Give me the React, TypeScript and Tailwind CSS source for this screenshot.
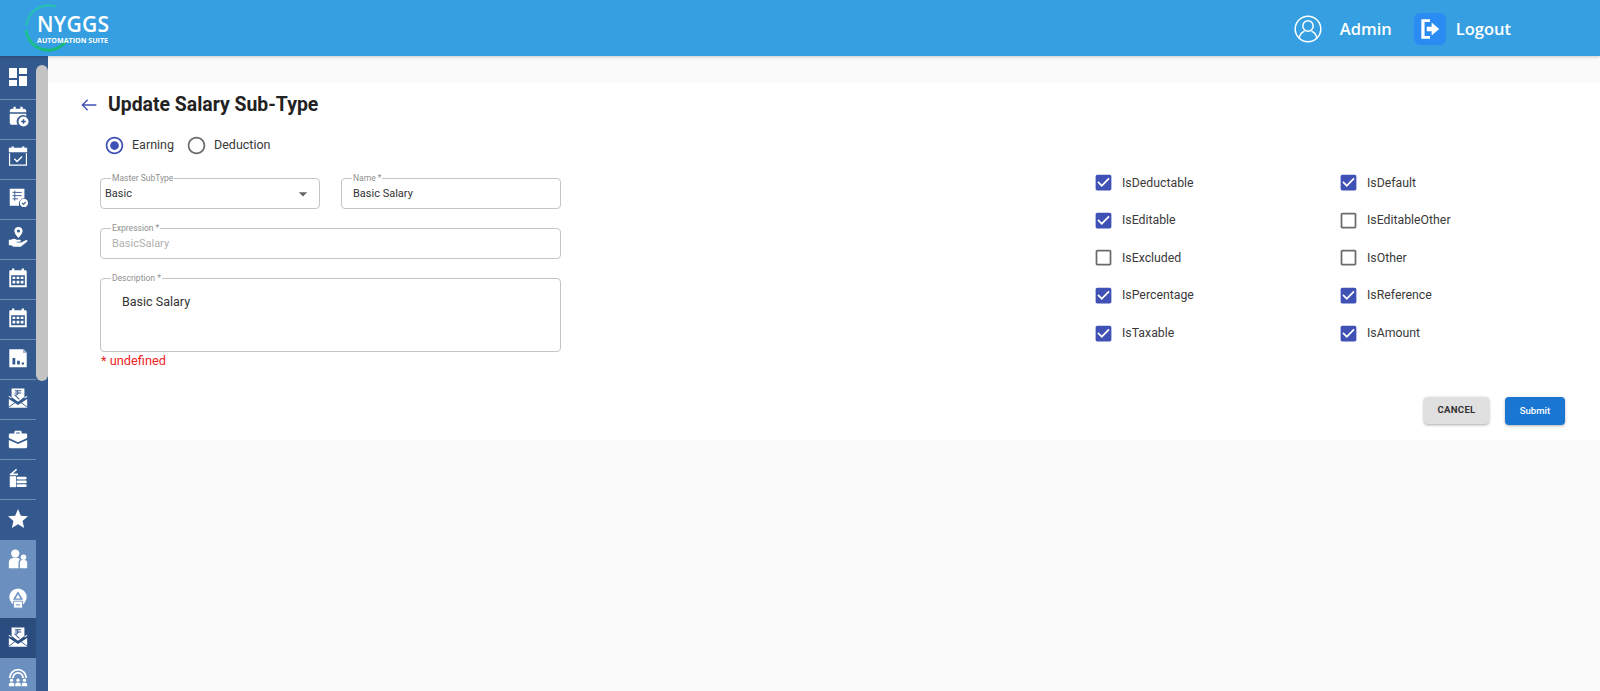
import React from "react";
import { MdDashboard, MdStar } from "react-icons/md";

const S = ({ children }: { children: React.ReactNode }) => (
  <svg viewBox="0 0 24 24" fill="#fff" className="w-[22px] h-[22px]">{children}</svg>
);
const BG = "#34598f";

const CalPlus = () => (
  <S>
    <path d="M3 6.500C3 5 4 4 5.500 4H7V2h2.500v2h5V2H17v2h1.500C20 4 21 5 21 6.500V8H3z" />
    <path d="M3 9.500h18v2.500a7 7 0 0 0-9.500 9.500H5.500C4 21.500 3 20.500 3 19z" />
    <circle cx="18" cy="18" r="5.500" />
    <path d="M18 15.500v5M15.500 18h5" stroke={BG} strokeWidth="1.600" />
  </S>
);
const CalCheck = () => (
  <S>
    <path d="M2 3h3V1.500h2.500V3h9V1.500H19V3h3v5H2z" />
    <path d="M2.800 9v13h18.400V9" fill="none" stroke="#fff" strokeWidth="1.300" />
    <path d="M8 15l3 3 5.500-5.500" fill="none" stroke="#fff" strokeWidth="1.500" />
  </S>
);
const DocCheck = () => (
  <S>
    <path d="M3 3h16v10.500a6 6 0 0 0-5.800 8H3z" />
    <path d="M6 7h10M6 10.500h10M6 14h6M8.500 5v11" stroke={BG} strokeWidth="1" fill="none" />
    <circle cx="18.500" cy="18.500" r="4.500" />
    <path d="M16.500 18.500l1.500 1.500 2.500-2.800" stroke={BG} strokeWidth="1.200" fill="none" />
  </S>
);
const HandPin = () => (
  <S>
    <path d="M12.500 1a4.500 4.500 0 0 1 4.500 4.500c0 3-4.500 7.500-4.500 7.500S8 8.500 8 5.500A4.500 4.500 0 0 1 12.500 1z" />
    <circle cx="12.500" cy="5.500" r="1.700" fill={BG} />
    <path d="M2 15h2.500c2-1.500 4-1.500 6 0h3.500c1.500 0 1.500 2.200 0 2.200h-3.500v.8h5l5-2.500c1.500-.7 2.500.8 1.300 1.800L15 22.500H7l-2.500-1.500H2z" />
  </S>
);
const CalGrid = () => (
  <S>
    <path d="M2.500 5c0-1 .7-1.500 1.500-1.500h1.500V1.500H8v2h8v-2h2.500v2H20c.8 0 1.500.5 1.500 1.500v17h-19zM4.500 9v11h15V9z" />
    <path d="M6 10.500h3v2.500H6zM10.500 10.500h3v2.500h-3zM15 10.500h3v2.500h-3zM6 15h3v3H6zM10.500 15h3v3h-3zM15 15h3v3h-3z" />
  </S>
);
const DocChart = () => (
  <S>
    <path d="M2.500 2.500H17l4.500 4.500v15h-19z" />
    <path d="M17.500 1.500l5 5h-5z" fill="#9fb4d1" />
    <path d="M6 12h3v7H6zM11 15h3v4h-3zM16 17h2.500v2H16z" fill={BG} />
  </S>
);
const MailRupee = () => (
  <S>
    <path d="M5 11V1.500h14V11l-7 5z" />
    <path d="M8.500 4h7M8.500 6.500h7M9 4c4 0 4 5-.2 5l4.700 4.500" fill="none" stroke={BG} strokeWidth="1.100" />
    <path d="M2 9.500l3 2v1L2 11zM22 9.500l-3 2v1l3-1.500zM2 13l10 6.500L22 13v9.500H2z" />
    <path d="M2 22l8-6M22 22l-8-6" stroke={BG} strokeWidth="1" />
  </S>
);
const Briefcase = () => (
  <S>
    <path d="M8 6V4.500C8 3.500 9 3 10 3h4c1 0 2 .5 2 1.500V6h4.500c1 0 1.500.7 1.500 1.500V11l-10 4.500L2 11V7.500C2 6.700 2.500 6 3.500 6zM10 6h4V5h-4z" />
    <path d="M2 13l10 4.500L22 13v7.500c0 .8-.7 1.500-1.500 1.500h-17C2.700 22 2 21.300 2 20.500z" />
  </S>
);
const Stack = () => (
  <S>
    <path d="M3 8l7-6 1 1.200L6.500 7H12v2H3z" />
    <path d="M3 10h7v12H3z" />
    <rect x="10.500" y="10.500" width="11" height="3" rx="1.500" />
    <rect x="10.500" y="14.700" width="11" height="3" rx="1" />
    <rect x="10.500" y="18.900" width="11" height="3" rx="1.500" />
  </S>
);
const People = () => (
  <S>
    <circle cx="9" cy="6" r="4.500" />
    <path d="M2 22v-6c0-3 2-5 5-5h4c1.500 0 2.500.5 3 1.500-1 1-1.500 2-1.500 3.500v6z" />
    <circle cx="18" cy="10" r="3" />
    <path d="M14 22v-6c0-1.800 1-3 3-3h2c2 0 3 1.200 3 3v6z" />
  </S>
);
const Gauge = () => (
  <S>
    <circle cx="12" cy="11" r="9.500" />
    <path d="M12 4.500l5.500 9.500h-11z" fill="#6b90bf" />
    <path d="M12 8l2.600 4.500H9.400z" />
    <path d="M7 15.500h10V23H7z" stroke="#6b90bf" strokeWidth="1" />
    <path d="M10 19.500h4" stroke="#6b90bf" strokeWidth="1.200" />
  </S>
);
const Arch = () => (
  <S>
    <path d="M2 13a10 10 0 0 1 20 0h-2a8 8 0 0 0-16 0z" />
    <path d="M5.500 13a6.500 6.500 0 0 1 13 0h-2a4.500 4.500 0 0 0-9 0z" />
    <circle cx="5" cy="15.500" r="1.800" />
    <circle cx="12" cy="15.500" r="1.800" />
    <circle cx="19" cy="15.500" r="1.800" />
    <path d="M2 22v-2c0-1 1-2 3-2s3 1 3 2v2zM9 22v-2c0-1 1-2 3-2s3 1 3 2v2zM16 22v-2c0-1 1-2 3-2s3 1 3 2v2z" />
  </S>
);
const Md = ({ I, size = 24 }: { I: React.ComponentType<{ size?: number; color?: string }>; size?: number }) => (
  <I size={size} color="#fff" />
);

const SideItem = ({ children, cls }: { children: React.ReactNode; cls: string }) => (
  <div className={`flex justify-center items-center shrink-0 ${cls}`}>{children}</div>
);

function Sidebar() {
  const line = "border-b border-[#6f8cb3]";
  return (
    <aside className="w-[48px] shrink-0 bg-[#34598f] flex overflow-hidden">
      <div className="w-[36px] shrink-0 flex flex-col">
        <SideItem cls={`h-[44px] pb-[2px] ${line}`}><Md I={MdDashboard} /></SideItem>
        <SideItem cls={`h-[40px] pb-[8px] ${line}`}><CalPlus /></SideItem>
        <SideItem cls={`h-[40px] pb-[8px] ${line}`}><CalCheck /></SideItem>
        <SideItem cls={`h-[40px] pb-[5px] ${line}`}><DocCheck /></SideItem>
        <SideItem cls={`h-[40px] pb-[5px] ${line}`}><HandPin /></SideItem>
        <SideItem cls={`h-[40px] pb-[3px] ${line}`}><CalGrid /></SideItem>
        <SideItem cls={`h-[40px] pb-[3px] ${line}`}><CalGrid /></SideItem>
        <SideItem cls={`h-[40px] pb-[4px] ${line}`}><DocChart /></SideItem>
        <SideItem cls={`h-[40px] pb-[4px] ${line}`}><MailRupee /></SideItem>
        <SideItem cls={`h-[40px] pb-[2px] ${line}`}><Briefcase /></SideItem>
        <SideItem cls={`h-[40px] pb-[4px] ${line}`}><Stack /></SideItem>
        <SideItem cls="h-[40px] pb-[2px]"><Md I={MdStar} size={24} /></SideItem>
        <div className="bg-[#6b90bf] flex flex-col shrink-0">
          <SideItem cls="h-[39px] pb-[2px]"><People /></SideItem>
          <SideItem cls="h-[39px] pb-[2px]"><Gauge /></SideItem>
        </div>
        <SideItem cls="h-[40px] bg-[#2b4c7e] pb-[2px]"><MailRupee /></SideItem>
        <SideItem cls="h-[40px] bg-[#6b90bf] pb-[2px]"><Arch /></SideItem>
      </div>
      <div className="w-[12px] shrink-0 pt-[9px]">
        <div className="h-[316px] bg-[#c4c4c4] rounded-[6px]" />
      </div>
    </aside>
  );
}

function Logo() {
  return (
    <div className="relative ml-[37px] mt-[1px] text-white font-['Open_Sans',sans-serif]">
      <svg viewBox="0 0 48 48" className="absolute left-[-13px] top-[-10px] w-[48px] h-[48px]" fill="none" strokeLinecap="round">
        <defs>
          <linearGradient id="g1" x1="0" y1="0" x2="1" y2="1">
            <stop offset="0" stopColor="#1fbe9a" />
            <stop offset="1" stopColor="#14b96f" />
          </linearGradient>
        </defs>
        <path d="M31 2.500A22 22 0 0 0 2.400 21" stroke="#27c0b4" strokeWidth="2.200" />
        <path d="M2.300 27A22 22 0 0 0 42 37" stroke="url(#g1)" strokeWidth="3" />
      </svg>
      <div className="relative text-[21px] leading-[20px] font-semibold tracking-[0.3px]">NYGGS</div>
      <div className="relative mt-[2px] text-[7.100px] leading-[8px] font-bold whitespace-nowrap">AUTOMATION SUITE</div>
    </div>
  );
}

function Header() {
  return (
    <header className="h-[56px] shrink-0 bg-[#369fe1] flex items-center shadow-[0_1px_3px_rgba(0,0,0,0.2)] relative z-10 font-['Open_Sans',sans-serif]">
      <Logo />
      <div className="ml-auto mr-[89px] mt-[2px] flex items-center text-white font-semibold text-[16.500px]">
        <svg viewBox="0 0 28 28" fill="none" stroke="#fff" strokeWidth="1.500" className="w-[28px] h-[28px]">
          <circle cx="14" cy="14" r="12.800" />
          <circle cx="14" cy="11" r="5.200" />
          <path d="M5 23.500c1-4.500 4-6.800 5.500-7.200M23 23.500c-1-4.500-4-6.800-5.500-7.200" />
        </svg>
        <span className="ml-[18px]">Admin</span>
        <div className="ml-[22px] w-[32px] h-[32px] rounded-[6px] bg-[#2a8cf2] flex items-center justify-center">
          <svg viewBox="0 0 24 24" className="w-[26px] h-[26px]" fill="#fff">
            <path d="M4 3h8v2.500H7v13h5V21H4z" />
            <path d="M13.500 6l7 6-7 6v-4H9v-4h4.500z" />
          </svg>
        </div>
        <span className="ml-[10px]">Logout</span>
      </div>
    </header>
  );
}

const Field = ({ label, w, h, children }: { label: string; w: string; h: string; children: React.ReactNode }) => (
  <fieldset className={`${w} ${h} border border-[#c4c4c4] rounded-[4px] pl-[5px] pr-[5px] shrink-0`}>
    <legend className="text-[8.500px] leading-[10px] text-[#8f8f8f] px-[1px] ml-[5px] whitespace-nowrap">{label}</legend>
    {children}
  </fieldset>
);

const Box = ({ on }: { on: boolean }) => (
  <svg viewBox="0 0 24 24" className="w-[21px] h-[21px] shrink-0" fill={on ? "#3f51b5" : "#6b6b6b"}>
    {on ? (
      <path d="M19 3H5c-1.110 0-2 .9-2 2v14c0 1.100.89 2 2 2h14c1.110 0 2-.9 2-2V5c0-1.100-.89-2-2-2zm-9 14l-5-5 1.410-1.410L10 14.170l7.590-7.590L19 8l-9 9z" />
    ) : (
      <path d="M19 5v14H5V5h14m0-2H5c-1.100 0-2 .9-2 2v14c0 1.100.9 2 2 2h14c1.100 0 2-.9 2-2V5c0-1.100-.9-2-2-2z" />
    )}
  </svg>
);
const Check = ({ label, on }: { label: string; on: boolean }) => (
  <div className="flex items-center h-[37.600px]">
    <Box on={on} />
    <span className="ml-[8px] text-[12.300px] text-[#3a3a3a]">{label}</span>
  </div>
);
const Radio = ({ on }: { on: boolean }) => (
  <svg viewBox="0 0 24 24" className="w-[21px] h-[21px] shrink-0" fill={on ? "#3f51b5" : "#6b6b6b"}>
    <path d="M12 2C6.480 2 2 6.480 2 12s4.480 10 10 10 10-4.480 10-10S17.520 2 12 2zm0 18c-4.420 0-8-3.580-8-8s3.580-8 8-8 8 3.580 8 8-3.580 8-8 8z" />
    {on && <circle cx="12" cy="12" r="5" />}
  </svg>
);

const left = [["IsDeductable", true], ["IsEditable", true], ["IsExcluded", false], ["IsPercentage", true], ["IsTaxable", true]] as const;
const right = [["IsDefault", true], ["IsEditableOther", false], ["IsOther", false], ["IsReference", true], ["IsAmount", true]] as const;

function Card() {
  return (
    <section className="bg-white h-[358px] flex flex-col">
      <div className="flex items-center h-[46px] pl-[33px]">
        <svg viewBox="0 0 24 24" className="w-[16px] h-[16px]" fill="none" stroke="#3f51b5" strokeWidth="2">
          <path d="M23 12H2M10 4l-8 8 8 8" />
        </svg>
        <h1 className="ml-[11px] text-[19.400px] leading-[24px] font-bold text-[#222]">Update Salary Sub-Type</h1>
      </div>
      <div className="flex items-start flex-1">
        <div className="ml-[52px] w-[461px]">
          <div className="flex items-center h-[28px] mt-[3px] ml-[4px] text-[12.500px] text-[#3a3a3a]">
            <Radio on />
            <span className="ml-[7px]">Earning</span>
            <span className="ml-[12px] flex items-center"><Radio on={false} /><span className="ml-[7px]">Deduction</span></span>
          </div>
          <div className="flex justify-between mt-[14px]">
            <Field label="Master SubType" w="w-[220px]" h="h-[36px]">
              <div className="flex items-center justify-between text-[11px] leading-[22px] text-[#333] -ml-[1px] mr-[1px]">
                <span>Basic</span>
                <svg viewBox="0 0 24 24" className="w-[20px] h-[20px]" fill="#666"><path d="M7 10l5 5 5-5z" /></svg>
              </div>
            </Field>
            <Field label="Name *" w="w-[220px]" h="h-[36px]">
              <div className="text-[11px] leading-[22px] text-[#333] pl-[6px]">Basic Salary</div>
            </Field>
          </div>
          <div className="mt-[14px]">
            <Field label="Expression *" w="w-[461px]" h="h-[36px]">
              <div className="text-[11px] leading-[22px] text-[#b0b0b0] pl-[6px]">BasicSalary</div>
            </Field>
          </div>
          <div className="mt-[14px]">
            <Field label="Description *" w="w-[461px]" h="h-[79px]">
              <div className="text-[12.500px] leading-[18px] text-[#333] pl-[16px] pt-[10px]">Basic Salary</div>
            </Field>
          </div>
          <div className="text-[12.800px] leading-[16px] text-[#f01f1f] mt-[1px] ml-[1px]">* undefined</div>
        </div>
        <div className="flex ml-[532px] mt-[36px]">
          <div className="w-[245px]">{left.map(([l, o]) => <Check key={l} label={l} on={o} />)}</div>
          <div>{right.map(([l, o]) => <Check key={l} label={l} on={o} />)}</div>
        </div>
      </div>
      <div className="flex justify-end gap-[16px] pr-[35px] pb-[15px]">
        <button className="w-[65px] h-[27px] bg-[#e0e0e0] rounded-[4px] text-[9.600px] font-bold tracking-[0.3px] text-[#333] shadow-[0_1px_3px_rgba(0,0,0,0.35)]">CANCEL</button>
        <button className="w-[60px] h-[28px] bg-[#1976d2] rounded-[4px] text-[9.600px] font-medium text-white shadow-[0_1px_3px_rgba(0,0,0,0.3)]">Submit</button>
      </div>
    </section>
  );
}

export default function App() {
  return (
    <div className="w-[1600px] h-[691px] flex flex-col overflow-hidden bg-[#fafafa] font-['Roboto',sans-serif]">
      <Header />
      <div className="flex flex-1 min-h-0">
        <Sidebar />
        <main className="flex-1 pt-[26px]">
          <Card />
        </main>
      </div>
    </div>
  );
}
